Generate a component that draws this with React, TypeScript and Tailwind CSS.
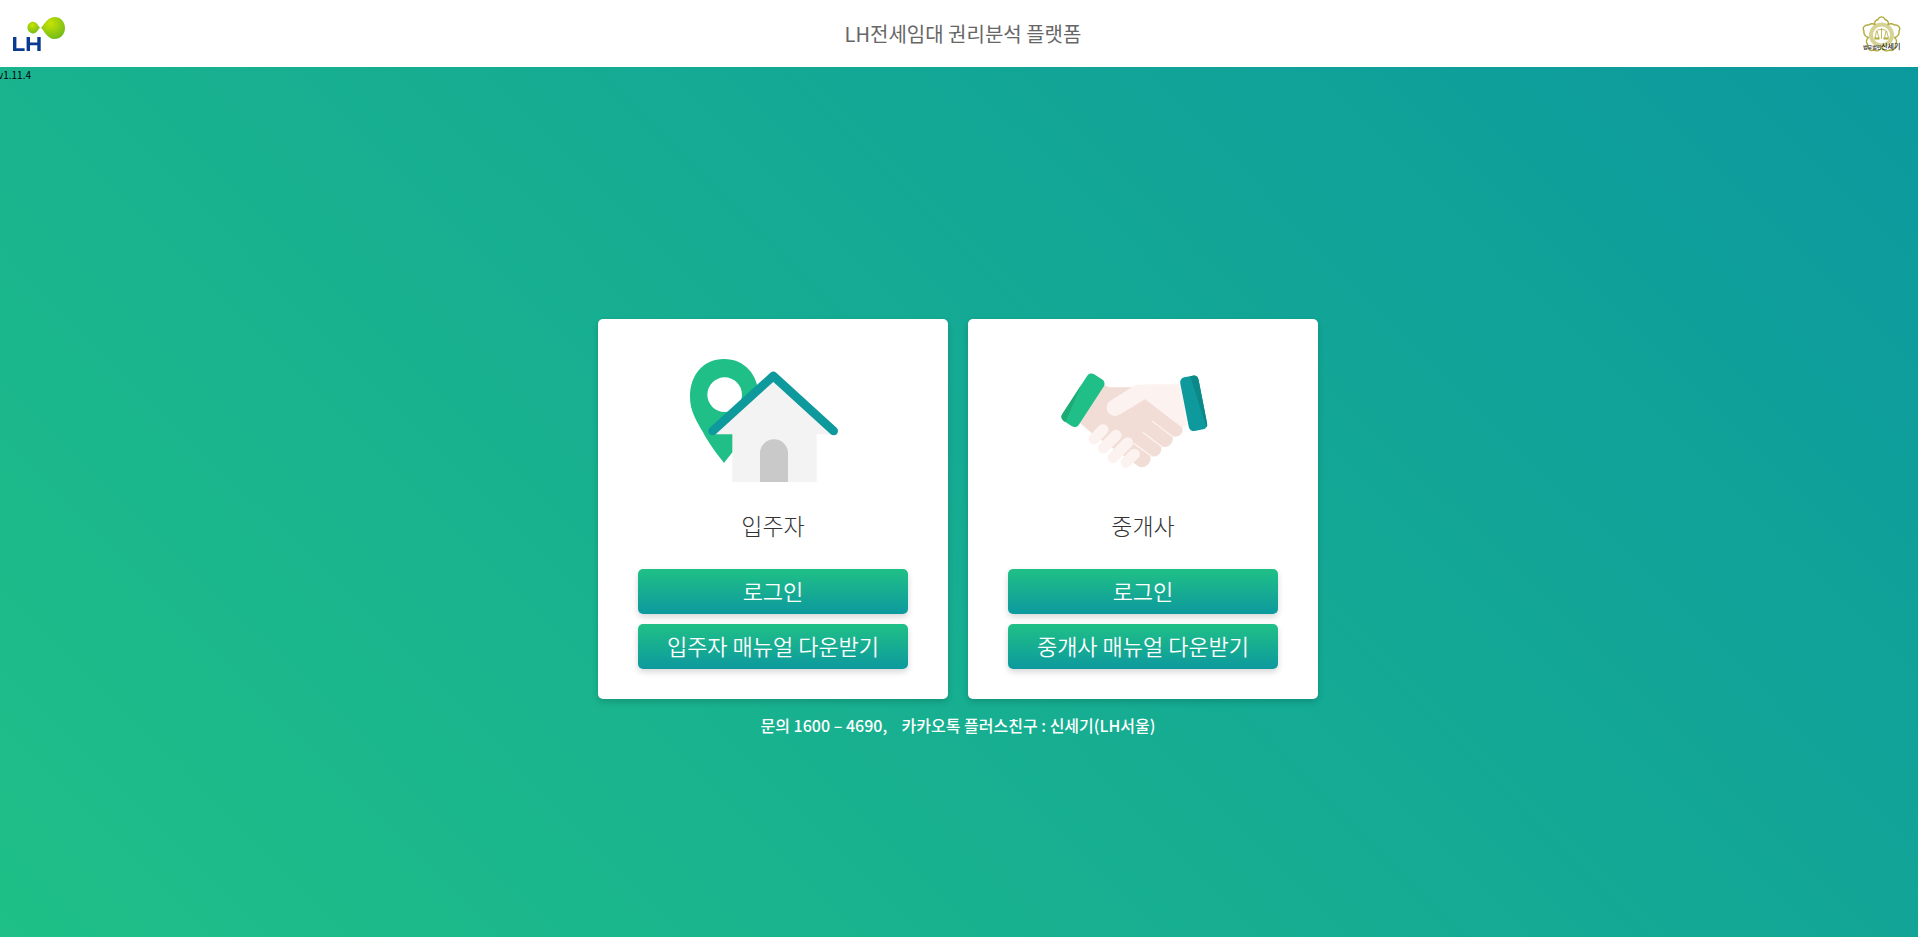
import type { ReactNode } from "react";

function LhLogo() {
  return (
    <svg width="54" height="35" viewBox="12 16 54 35" role="img" aria-label="LH">
      <defs>
        <radialGradient id="leaf" cx="0.4" cy="0.3" r="0.75">
          <stop offset="0" stopColor="#c8e400" />
          <stop offset="1" stopColor="#6fb91c" />
        </radialGradient>
      </defs>
      <path d="M40 27.7C38.4 28.8 37 33.400 33 33.400C29.800 33.400 27.400 30.800 27.400 27.600C27.400 24.400 30 21.800 33 21.800C37 21.800 38.400 26.600 40 27.700Z" fill="url(#leaf)" />
      <path d="M41 27.7C43.5 26 47 17 54.6 17C60.6 17 65 21.800 65 28C65 34.200 60.600 39 54.600 39C47 39 43.500 29.600 41 27.700Z" fill="url(#leaf)" />
      <path d="M13 37H16.400V48.200H24.600V51H13ZM26.600 37H30V42.400H37.300V37H40.700V51H37.300V45.300H30V51H26.600Z" fill="#0b3b91" />
    </svg>
  );
}

function LawFirmLogo() {
  return (
    <svg width="40" height="40" viewBox="1862 13 40 40" role="img" aria-label="법무법인 신세기">
      <g fill="none" stroke="#b0aa3a" strokeWidth="1.400" strokeLinejoin="round">
        <circle cx="1881.500" cy="34" r="10.500" stroke="#d6d394" strokeWidth="4" />
        <path d="M1875 23.500C1874 21 1875.500 19.500 1878 18.500C1879.500 15 1883.500 15 1885 18.500C1887.500 19.500 1889 21 1888 23.500C1890.500 22 1893 23 1894.500 24C1898.500 23.500 1901 27 1899 30C1899.500 33 1897.500 35.500 1894.500 36.500C1897 38.500 1897 41.500 1895.500 43C1896 47.500 1893 50.500 1889.500 49C1886 51 1883 49.500 1881.500 46.500C1880 49.500 1877 51 1873.500 49C1870 50.500 1867 47.500 1867.500 43C1866 41.500 1866 38.500 1868.500 36.500C1865.500 35.500 1863.500 33 1864 30C1862 27 1864.500 23.500 1868.500 24C1870 23 1872.500 22 1875 23.500Z" />
        <path d="M1881.500 27V38M1876.500 30C1878 28 1885 28 1886.500 30M1876.500 30L1875 37M1877 30L1879 37M1886 30L1884.500 37M1886.500 30L1888.500 37" strokeWidth="0.800" />
        <path d="M1874.500 37.500H1879.500M1883.500 37.500H1888.500" strokeWidth="1.800" />
      </g>
      <text x="1863" y="48" className="fill-[#333333] font-['Noto_Sans_CJK_KR',sans-serif] text-[5px] font-medium">법무법인</text>
      <text x="1881" y="48" className="fill-[#222222] font-['Noto_Sans_CJK_KR',sans-serif] text-[7px] font-medium">신세기</text>
    </svg>
  );
}

function HouseIcon() {
  return (
    <svg width="166" height="125" viewBox="60 54 498 375" aria-hidden="true">
      <path d="M162 369C148 351 117 312 99 277C80 243 60 214 60 171C60 103 101 57 162 57C224 57 266 105 266 170C266 238 205 315 162 369ZM164 112A52 52 0 1 0 164 216A52 52 0 1 0 164 112Z" fill="#20bf88" fillRule="evenodd" />
      <path d="M311 120L480 283H440V426H187V283H136Z" fill="#f3f3f3" />
      <path d="M136 281L311 122L484 281" fill="none" stroke="#dedede" strokeWidth="4" />
      <path d="M270 426V340A42 42 0 0 1 354 340V426Z" fill="#c9c9c9" />
      <path d="M128 273L310 108L491 273" fill="none" stroke="#0e9a9d" strokeWidth="26" strokeLinecap="round" strokeLinejoin="round" />
    </svg>
  );
}

function HandshakeIcon() {
  return (
    <svg width="166" height="125" viewBox="58 23 498 375" aria-hidden="true">
      <path d="M190 103L205 111H290L320 140L416 222Q432 236 422 250Q411 263 395 258Q400 275 387 285Q375 295 361 286Q365 304 354 313Q342 323 328 315Q334 332 320 344Q306 356 291 346L240 310L155 250L118 218Z" fill="#f2ddd6" />
      <path d="M283 105L320 102H420L439 224L425 232L313 147L240 191Q218 204 204 189Q190 169 207 153Z" fill="#fcf3f0" />
      <g fill="none" stroke="#fcf3f0" strokeLinecap="round">
        <path d="M335 213L398 261M308 247L365 290M280 280L332 317" strokeWidth="4" />
        <path d="M160 266L187 238M188 293L226 255M217 322L261 277M256 336L281 312" strokeWidth="33" />
      </g>
      <g transform="rotate(33 127 149)">
        <rect x="98" y="66" width="59" height="167" rx="15" fill="#20bf88" />
        <path d="M98 115L119 233H113Q98 233 98 218Z" fill="#1eaa73" />
      </g>
      <g transform="rotate(-11 459 159)">
        <rect x="431" y="77" width="56" height="164" rx="15" fill="#0e9a9d" />
        <path d="M464 77H472Q487 77 487 92V226Q487 233 483 237Z" fill="#0c8889" />
      </g>
    </svg>
  );
}

const buttonClass =
  "flex h-[45px] w-full items-center justify-center rounded-[5px] bg-linear-to-b/srgb from-[#20c086] to-[#0d999e] pb-0.5 text-[22px] font-[350] text-white shadow-[0_3px_6px_rgba(0,0,0,0.16)]";

function RoleCard({ name, manual, icon }: { name: string; manual: string; icon: ReactNode }) {
  return (
    <section className="flex w-[350px] flex-col items-center rounded-[5px] bg-white px-10 pt-[39px] pb-[30px] shadow-[0_3px_6px_rgba(0,0,0,0.16)]">
      {icon}
      <h2 className="mt-[25px] mb-[27px] text-[23px] leading-[34px] font-light text-[#333333]">{name}</h2>
      <div className="flex w-full flex-col gap-[10px]">
        <button type="button" className={buttonClass}>로그인</button>
        <button type="button" className={buttonClass}>{manual}</button>
      </div>
    </section>
  );
}

export default function App() {
  return (
    <div className="flex min-h-screen flex-col bg-white font-['Noto_Sans_CJK_KR',sans-serif]">
      <header className="grid h-[67px] grid-cols-[1fr_auto_1fr] items-center bg-white px-3">
        <LhLogo />
        <h1 className="pl-2 text-[20px] leading-[30px] text-[#666666]">LH전세임대 권리분석 플랫폼</h1>
        <div className="flex justify-end pr-1">
          <LawFirmLogo />
        </div>
      </header>
      <main className="flex flex-1 flex-col bg-linear-45/srgb from-[#1fbf87] to-[#0c999e]">
        <p className="-ml-0.5 text-[10px] leading-4 text-black">v1.11.4</p>
        <div className="flex flex-1 flex-col items-center justify-center pt-9 pr-0.5">
          <div className="flex flex-wrap justify-center gap-5">
            <RoleCard name="입주자" manual="입주자 매뉴얼 다운받기" icon={<HouseIcon />} />
            <RoleCard name="중개사" manual="중개사 매뉴얼 다운받기" icon={<HandshakeIcon />} />
          </div>
          <p className="mt-3.5 text-[16px] leading-6 font-medium whitespace-pre text-white">{"문의 1600 – 4690,    카카오톡 플러스친구 : 신세기(LH서울)"}</p>
        </div>
      </main>
    </div>
  );
}
